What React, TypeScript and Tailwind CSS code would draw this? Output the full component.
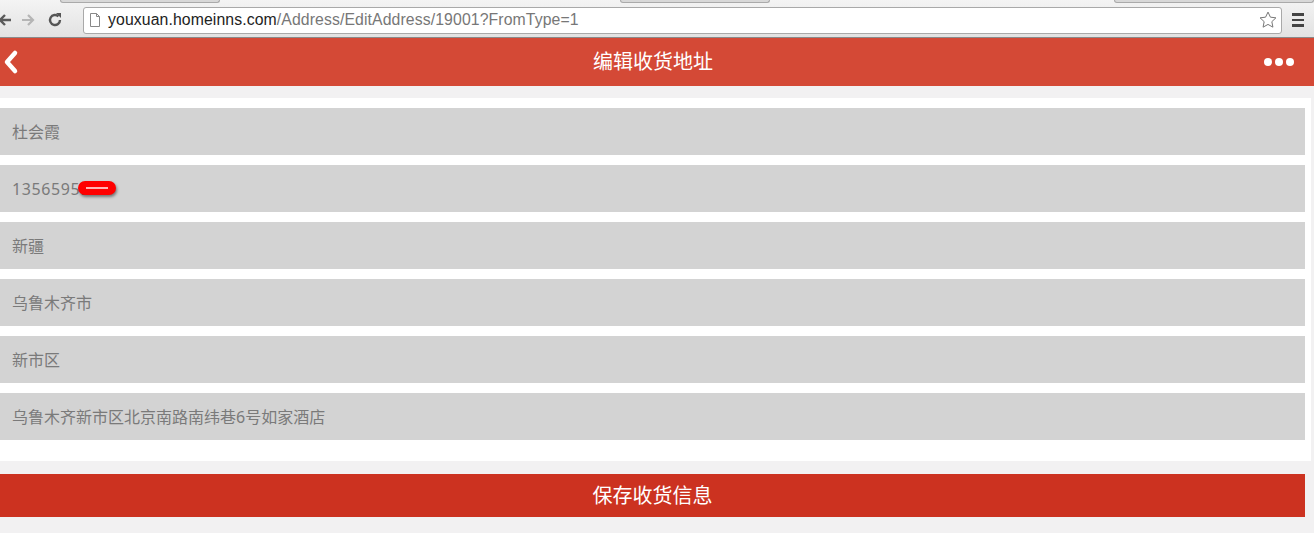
import React from "react";

const rows = ["杜会霞", "PHONE", "新疆", "乌鲁木齐市", "新市区", "乌鲁木齐新市区北京南路南纬巷6号如家酒店"];

export default function App() {
  return (
    <div className="w-[1314px] h-[533px] overflow-hidden bg-[#f2f1f2] flex flex-col" style={{ fontFamily: '"Noto Sans", "Noto Sans CJK SC", sans-serif' }}>
      {/* browser chrome */}
      <div className="h-[38px] flex flex-col bg-gradient-to-b from-[#f4f4f4] to-[#e2e2e2] border-b border-[#8a8a8a]">
        <div className="h-[3px] flex">
          <div className="w-[60px]" />
          <div className="w-[160px] border-b border-x border-[#aaa] rounded-b-sm bg-[#d8d8d8]" />
          <div className="w-[400px]" />
          <div className="w-[150px] border-b border-x border-[#aaa] rounded-b-sm bg-[#d8d8d8]" />
          <div className="flex-1" />
          <div className="w-[200px] border-b border-x border-[#aaa] rounded-b-sm bg-[#d8d8d8]" />
        </div>
        <div className="flex-1 flex items-center">
          <div className="w-[83px] flex items-center text-[#666]">
            <svg width="14" height="14" viewBox="0 0 14 14" className="ml-[-2px]"><path d="M13 7H3M7 2L2 7l5 5" stroke="#5a5a5a" strokeWidth="2.4" fill="none" /></svg>
            <svg width="14" height="14" viewBox="0 0 14 14" className="ml-[9px]"><path d="M1 7h10M7 2l5 5-5 5" stroke="#b5b5b5" strokeWidth="2.2" fill="none" /></svg>
            <svg width="16" height="16" viewBox="0 0 16 16" className="ml-[12px]"><path d="M13 8a5 5 0 1 1-1.5-3.6" stroke="#555" strokeWidth="2.4" fill="none" /><path d="M9 1h5v5z" fill="#555" /></svg>
          </div>
          <div className="flex-1 h-[27px] bg-white border border-[#a9a9a9] rounded-[3px] flex items-center pl-[5px] mr-[10px]">
            <svg width="12" height="14" viewBox="0 0 12 14"><path d="M1.5 0.5h6l3 3v10h-9z M7.5 0.5v3h3" stroke="#888" fill="none" /></svg>
            <span className="ml-[7px] text-[15.8px] text-[#222] tracking-[0.1px]" style={{ fontFamily: '"Liberation Sans", Arial, sans-serif' }}>youxuan.homeinns.com<span className="text-[#777]">/Address/EditAddress/19001?FromType=1</span></span>
            <div className="flex-1" />
            <svg width="20" height="20" viewBox="0 0 24 24" className="mr-[3px]"><path d="M12 2.5l2.9 6.1 6.6.8-4.9 4.6 1.3 6.6L12 17.3l-5.9 3.3 1.3-6.6-4.9-4.6 6.6-.8z" stroke="#777" strokeWidth="1.2" fill="white" /></svg>
          </div>
          <div className="w-[22px] flex flex-col gap-[3px] items-start">
            <div className="w-[12px] h-[2.5px] bg-[#444]" />
            <div className="w-[12px] h-[2.5px] bg-[#444]" />
            <div className="w-[12px] h-[2.5px] bg-[#444]" />
          </div>
        </div>
      </div>
      {/* red header */}
      <div className="h-[48px] bg-[#d44936] flex items-center">
        <div className="w-[60px] flex items-center">
          <svg width="20" height="26" viewBox="0 0 20 26" className="ml-[2px]"><path d="M13 4L5 13l8 9" stroke="white" strokeWidth="4.5" strokeLinecap="round" strokeLinejoin="round" fill="none" /></svg>
        </div>
        <div className="flex-1 text-center text-white text-[20px]">编辑收货地址</div>
        <div className="w-[68px] flex justify-end">
          <div className="flex gap-[3px] mr-[20px]">
            <div className="w-[8px] h-[8px] rounded-full bg-white" />
            <div className="w-[8px] h-[8px] rounded-full bg-white" />
            <div className="w-[8px] h-[8px] rounded-full bg-white" />
          </div>
        </div>
      </div>
      <div className="h-[12px]" />
      {/* white panel */}
      <div className="bg-white w-[1311px] pt-[10px] pb-[21px] flex flex-col gap-[10px]">
        {rows.map((r, i) => (
          <div key={i} className="w-[1305px] h-[47px] bg-[#d3d3d3] flex items-center pl-[12px] text-[16px] text-[#7a7a7a]">
            {r === "PHONE" ? (
              <span className="relative flex items-center">
                <span className="tracking-[0.6px]">13565959</span>
                <span className="absolute left-[66px] top-[4px] w-[38px] h-[14px] rounded-full bg-[#ff0000] shadow-[1px_2px_3px_rgba(0,0,0,0.45)] flex items-center justify-center">
                  <span className="block w-[22px] h-[2px] bg-white/70" />
                </span>
              </span>
            ) : (
              r
            )}
          </div>
        ))}
      </div>
      <div className="h-[13px]" />
      <div className="w-[1305px] h-[43px] bg-[#cc3220] flex items-center justify-center text-white text-[20px]">保存收货信息</div>
    </div>
  );
}
